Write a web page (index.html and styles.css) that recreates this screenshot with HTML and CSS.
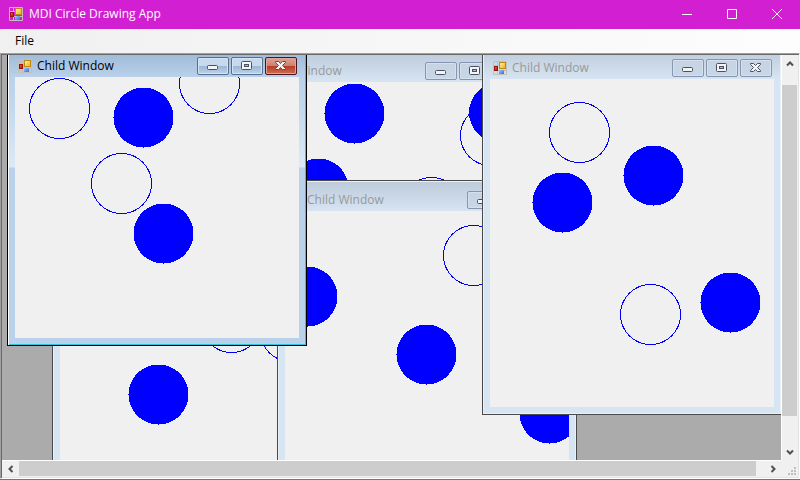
FILE: index.html
```html
<!DOCTYPE html>
<html lang="en">
<head>
<meta charset="utf-8">
<title>MDI Circle Drawing App</title>
<link rel="stylesheet" href="styles.css">
</head>
<body>
<svg class="defs" aria-hidden="true">
  <defs>
    <linearGradient id="gold" x1="0" y1="0" x2="1" y2="1"><stop offset="0" stop-color="#fff3a8"/><stop offset="1" stop-color="#efae08"/></linearGradient>
    <linearGradient id="red" x1="0" y1="0" x2="1" y2="1"><stop offset="0" stop-color="#e87050"/><stop offset="1" stop-color="#a80c04"/></linearGradient>
    <linearGradient id="blue" x1="0" y1="0" x2="1" y2="1"><stop offset="0" stop-color="#9cc4ff"/><stop offset="1" stop-color="#3470d8"/></linearGradient>
    <symbol id="form" viewBox="0 0 14 14">
      <path d="M.5.5h13v13H.5zM.5 4.500h13M.5 9.500h13M4.500.5v13" fill="none" stroke="#c4bfb9"/>
      <rect x="6.500" y="1.500" width="6" height="6" fill="url(#gold)" stroke="#c08a10"/>
      <rect x="1.500" y="5.500" width="3" height="4" fill="url(#red)" stroke="#9c1408"/>
      <rect x="6" y="9" width="5" height="4" fill="url(#blue)"/>
    </symbol>
    <symbol id="min" viewBox="0 0 12 12"><rect x=".5" y="5.500" width="10" height="4" rx="1" fill="#f4f4f4" stroke="#4a5064"/></symbol>
    <symbol id="max" viewBox="0 0 12 12">
      <rect x=".5" y="1.500" width="10" height="8" rx="1" fill="#f4f4f4" stroke="#4a5064"/>
      <rect x="3.500" y="4.500" width="4" height="2" fill="#a8bdd4" stroke="#4a5064"/>
    </symbol>
    <symbol id="close" viewBox="0 0 12 12"><path d="M.5 1.500h3l2 2 2-2h3v1l-3 3 3 3v1h-3l-2-2-2 2h-3v-1l3-3-3-3z" fill="#f4f4f4" stroke="#4a5064"/></symbol>
    <symbol id="arrow" viewBox="0 0 8 8"><path d="M1 5.500l3-3 3 3" fill="none" stroke="#505050" stroke-width="2"/></symbol>
  </defs>
</svg>
<div class="app">
  <header class="titlebar">
    <svg class="form-icon" aria-hidden="true"><use href="#form"/></svg>
    <h1>MDI Circle Drawing App</h1>
    <div class="system">
      <button type="button" aria-label="Minimize"><svg viewBox="0 0 10 10"><path d="M0 5.500h10"/></svg></button>
      <button type="button" aria-label="Maximize"><svg viewBox="0 0 10 10"><path d="M.5.5h9v9h-9z"/></svg></button>
      <button type="button" aria-label="Close"><svg viewBox="0 0 10 10"><path d="M0 0l10 10M10 0L0 10"/></svg></button>
    </div>
  </header>
  <nav class="menu"><button type="button">File</button></nav>
  <main class="workspace">
    <div class="canvas">
      <section class="child child-five">
        <header><svg class="form-icon" aria-hidden="true"><use href="#form"/></svg><h2>Child Window</h2></header>
        <svg class="drawing"><circle cx="171.500" cy="120.500" r="30"/><circle cx="230.500" cy="129.500" r="30"/><circle class="solid" cx="98.500" cy="192.500" r="30"/></svg>
      </section>
      <section class="child child-two">
        <header><svg class="form-icon" aria-hidden="true"><use href="#form"/></svg><h2>Child Window</h2>
          <div class="caption"><button type="button" aria-label="Minimize"><svg><use href="#min"/></svg></button><button type="button" aria-label="Maximize"><svg><use href="#max"/></svg></button><button type="button" class="close" aria-label="Close"><svg><use href="#close"/></svg></button></div></header>
        <svg class="drawing"><circle cx="247.500" cy="53.500" r="30"/><circle cx="188.500" cy="125.500" r="30"/><circle class="solid" cx="111.500" cy="31.500" r="30"/><circle class="solid" cx="75.500" cy="106.500" r="30"/><circle class="solid" cx="256" cy="30.500" r="30"/></svg>
      </section>
      <section class="child child-three">
        <header><svg class="form-icon" aria-hidden="true"><use href="#form"/></svg><h2>Child Window</h2>
          <div class="caption"><button type="button" aria-label="Minimize"><svg><use href="#min"/></svg></button><button type="button" aria-label="Maximize"><svg><use href="#max"/></svg></button><button type="button" class="close" aria-label="Close"><svg><use href="#close"/></svg></button></div></header>
        <svg class="drawing"><circle cx="188.500" cy="44.500" r="30"/><circle class="solid" cx="22.500" cy="85.500" r="30"/><circle class="solid" cx="141.500" cy="143.500" r="30"/><circle class="solid" cx="264.500" cy="202.500" r="30"/></svg>
      </section>
      <section class="child child-four">
        <header><svg class="form-icon" aria-hidden="true"><use href="#form"/></svg><h2>Child Window</h2>
          <div class="caption"><button type="button" aria-label="Minimize"><svg><use href="#min"/></svg></button><button type="button" aria-label="Maximize"><svg><use href="#max"/></svg></button><button type="button" class="close" aria-label="Close"><svg><use href="#close"/></svg></button></div></header>
        <svg class="drawing"><circle cx="89.500" cy="53.500" r="30"/><circle cx="160.500" cy="235.500" r="30"/><circle class="solid" cx="72.500" cy="123.500" r="30"/><circle class="solid" cx="163.500" cy="96.500" r="30"/><circle class="solid" cx="240.500" cy="223.500" r="30"/></svg>
      </section>
      <section class="child child-one active">
        <header><svg class="form-icon" aria-hidden="true"><use href="#form"/></svg><h2>Child Window</h2>
          <div class="caption"><button type="button" aria-label="Minimize"><svg><use href="#min"/></svg></button><button type="button" aria-label="Maximize"><svg><use href="#max"/></svg></button><button type="button" class="close" aria-label="Close"><svg><use href="#close"/></svg></button></div></header>
        <svg class="drawing"><circle cx="44.500" cy="31.500" r="30"/><circle cx="194.500" cy="6.500" r="30"/><circle cx="106.500" cy="106.500" r="30"/><circle class="solid" cx="128.500" cy="40.500" r="30"/><circle class="solid" cx="148.500" cy="156.500" r="30"/></svg>
      </section>
    </div>
    <div class="scroll vertical">
      <button type="button" aria-label="Scroll up"><svg class="arrow"><use href="#arrow"/></svg></button>
      <div class="before"></div><div class="thumb"></div><div class="after"></div>
      <button type="button" aria-label="Scroll down"><svg class="arrow down"><use href="#arrow"/></svg></button>
    </div>
    <div class="scroll horizontal">
      <button type="button" aria-label="Scroll left"><svg class="arrow left"><use href="#arrow"/></svg></button>
      <div class="thumb"></div><div class="after"></div>
      <button type="button" aria-label="Scroll right"><svg class="arrow right"><use href="#arrow"/></svg></button>
    </div>
    <div class="grip"><svg viewBox="0 0 8 8" aria-hidden="true"><path d="M6 0h2v2H6zM3 3h2v2H3zM6 3h2v2H6zM0 6h2v2H0zM3 6h2v2H3zM6 6h2v2H6z"/></svg></div>
  </main>
</div>
</body>
</html>
```
FILE: styles.css
```css
* { box-sizing: border-box; }

body {
  margin: 0;
  font: 12px/16px "Open Sans", "Noto Sans", sans-serif;
  color: #000;
}

h1, h2 { margin: 0; font-size: 12px; font-weight: 400; white-space: nowrap; }
button { padding: 0; border: 0; background: none; font: inherit; color: inherit; }
svg { display: block; }

.defs { position: absolute; width: 0; height: 0; }

.app {
  display: flex;
  flex-direction: column;
  height: 100vh;
  background: #f0f0f0;
  border-bottom: 1px solid #c040c0;
}

.titlebar {
  display: flex;
  align-items: center;
  gap: 6px;
  flex: 0 0 29px;
  padding: 0 1px 2px 9px;
  background: #d11fd1;
  color: #fff;
}

.form-icon { width: 14px; height: 14px; flex: none; }

.system { display: flex; margin-left: auto; }
.system button { display: grid; place-items: center; width: 45px; height: 27px; }
.system svg { width: 10px; height: 10px; overflow: visible; fill: none; stroke: #fff; }

.menu {
  display: flex;
  align-items: center;
  flex: 0 0 24px;
  padding-left: 15px;
  background: linear-gradient(90deg, #f0f0f0, #fdfdfd);
}

.workspace {
  flex: 1;
  min-height: 0;
  display: grid;
  grid-template: minmax(0, 1fr) 17px / minmax(0, 1fr) 17px;
  padding: 1px;
  border: 1px solid;
  border-color: #a0a0a0 #fff #fff #a0a0a0;
  background: linear-gradient(#696969, #696969) 0 0 / 100% 1px no-repeat,
    linear-gradient(#696969, #696969) 0 0 / 1px 100% no-repeat, #e3e3e3;
}

.canvas { position: relative; overflow: hidden; background: #ababab; }

/* Child windows float freely on the workspace canvas. */
.child {
  position: absolute;
  display: flex;
  flex-direction: column;
  width: 300px;
  height: 300px;
  padding: 0 7px 7px;
  border: 1px solid #4a4a4a;
  background: linear-gradient(#bccada, #d7e4f2 30px);
  box-shadow: inset 0 0 0 1px #e8f0f8;
  color: #999;
}
.child-one { left: 5px; top: -9px; }
.child-two { left: 233px; top: -4px; height: 200px; }
.child-three { left: 275px; top: 125px; height: 367px; }
.child-four { left: 480px; top: -7px; height: 367px; }
.child-five { left: 50px; top: 116px; height: 367px; }

.child header {
  display: flex;
  align-items: center;
  gap: 5px;
  flex: 0 0 30px;
  padding: 8px 2px 0 3px;
}

.drawing {
  flex: 1;
  width: 100%;
  min-height: 0;
  overflow: hidden;
  background: #f0f0f0;
  fill: none;
  stroke: #00f;
  shape-rendering: crispEdges;
}
.drawing .solid { fill: #00f; stroke: none; }

.caption { display: flex; gap: 2px; margin-left: auto; }
.caption button {
  display: grid;
  place-items: center;
  width: 32px;
  height: 18px;
  border: 1px solid #8795b2;
  border-radius: 2px;
  background: linear-gradient(#c5d3e2, #c8d7e7);
  box-shadow: inset 0 0 0 1px #d5e1ee;
}
.caption svg { width: 12px; height: 12px; }

.active {
  border-color: #000;
  color: #000;
  background: linear-gradient(#98b4d2, #b9d1ea 30px, #c3d8ee 60px, #dce9f6 120px, #b9d1ea 121px);
  box-shadow: inset 1px 0 #fff, inset -1px -1px #2fc5dd;
}
.active .caption button {
  border-color: #586e8c;
  background: linear-gradient(#c6d9ed 50%, #9cb7d3 50%, #bad3eb);
  box-shadow: inset 0 0 0 1px #d4e4f4;
}
.active .caption .close {
  border-color: #4a1520;
  background: linear-gradient(#dca397, #cc806f 50%, #b43b24 50%, #d16c50);
  box-shadow: inset 0 0 0 1px #e0a498;
}

.scroll { display: flex; background: #f0f0f0; }
.scroll button { display: grid; place-items: center; flex: 0 0 17px; }
.thumb { background: #cdcdcd; }
.vertical { flex-direction: column; border-left: 1px solid #fff; padding-right: 1px; }
.vertical .before { flex: 13; }
.vertical .thumb { flex: 332; }
.vertical .after { flex: 27; }
.horizontal { border-top: 1px solid #fff; padding-bottom: 1px; }
.horizontal .thumb { flex: 737; }
.horizontal .after { flex: 8; }
.arrow { width: 8px; height: 8px; }
.down { transform: rotate(180deg); }
.left { transform: rotate(-90deg); }
.right { transform: rotate(90deg); }

.grip { display: grid; place-items: end; padding: 2px; background: #f0f0f0; }
.grip svg { width: 8px; height: 8px; fill: #bfbfbf; }
```
